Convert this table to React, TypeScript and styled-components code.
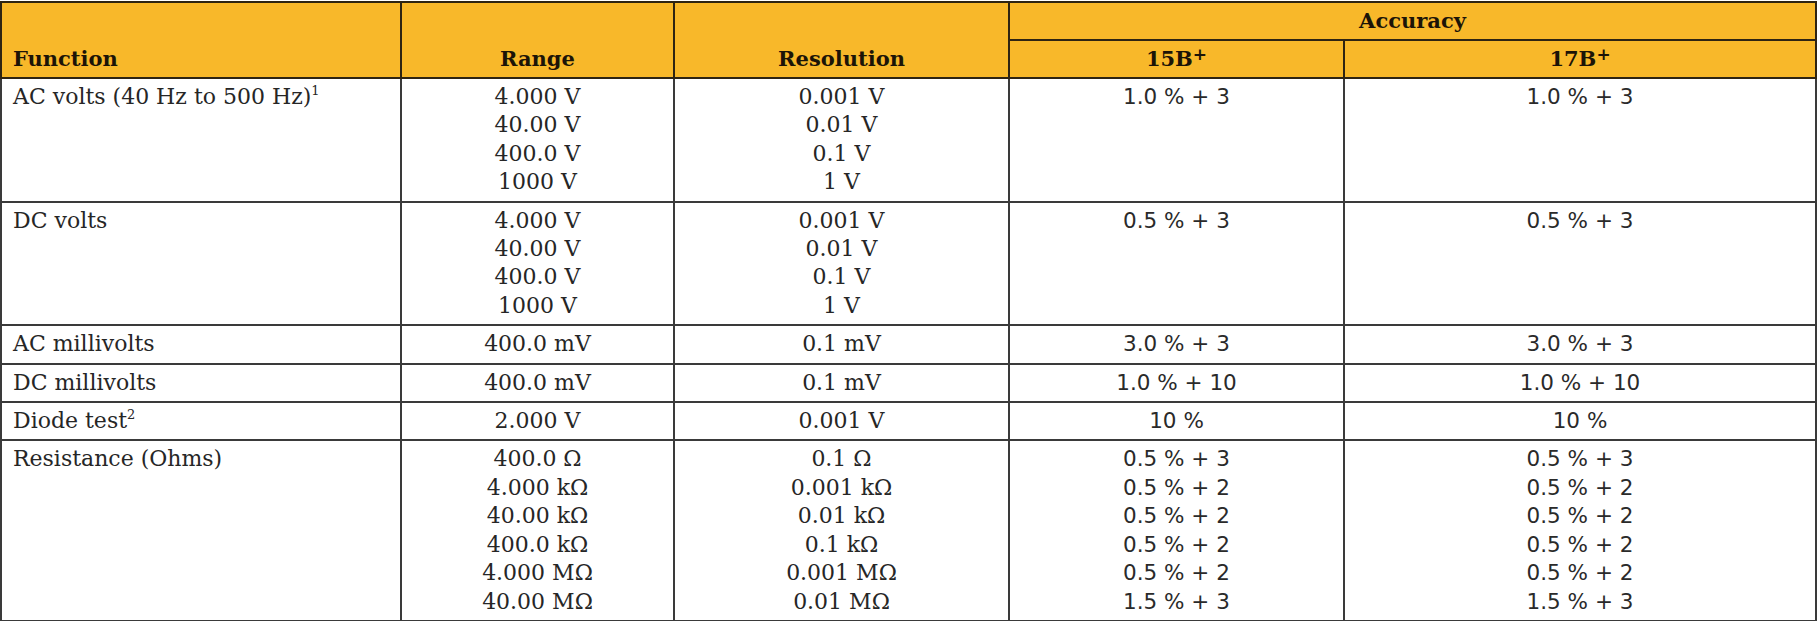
import React from 'react';
import styled, {createGlobalStyle} from 'styled-components';

const GlobalStyle = createGlobalStyle`
    html, body {
        margin: 0;
        padding: 0;
        background: #fff;
    }
`;

interface SpecRow {
    fn: string;
    note?: string;
    ranges: string[];
    resolutions: string[];
    acc15: string[];
    acc17: string[];
}

const rows: SpecRow[] = [
    {
        fn: 'AC volts (40 Hz to 500 Hz)',
        note: '1',
        ranges: ['4.000 V', '40.00 V', '400.0 V', '1000 V'],
        resolutions: ['0.001 V', '0.01 V', '0.1 V', '1 V'],
        acc15: ['1.0 % + 3'],
        acc17: ['1.0 % + 3'],
    },
    {
        fn: 'DC volts',
        ranges: ['4.000 V', '40.00 V', '400.0 V', '1000 V'],
        resolutions: ['0.001 V', '0.01 V', '0.1 V', '1 V'],
        acc15: ['0.5 % + 3'],
        acc17: ['0.5 % + 3'],
    },
    {
        fn: 'AC millivolts',
        ranges: ['400.0 mV'],
        resolutions: ['0.1 mV'],
        acc15: ['3.0 % + 3'],
        acc17: ['3.0 % + 3'],
    },
    {
        fn: 'DC millivolts',
        ranges: ['400.0 mV'],
        resolutions: ['0.1 mV'],
        acc15: ['1.0 % + 10'],
        acc17: ['1.0 % + 10'],
    },
    {
        fn: 'Diode test',
        note: '2',
        ranges: ['2.000 V'],
        resolutions: ['0.001 V'],
        acc15: ['10 %'],
        acc17: ['10 %'],
    },
    {
        fn: 'Resistance (Ohms)',
        ranges: ['400.0 Ω', '4.000 kΩ', '40.00 kΩ', '400.0 kΩ', '4.000 MΩ', '40.00 MΩ'],
        resolutions: ['0.1 Ω', '0.001 kΩ', '0.01 kΩ', '0.1 kΩ', '0.001 MΩ', '0.01 MΩ'],
        acc15: ['0.5 % + 3', '0.5 % + 2', '0.5 % + 2', '0.5 % + 2', '0.5 % + 2', '1.5 % + 3'],
        acc17: ['0.5 % + 3', '0.5 % + 2', '0.5 % + 2', '0.5 % + 2', '0.5 % + 2', '1.5 % + 3'],
    },
];

/* Spec table */
const Table = styled.table`
    width: 1815px;
    table-layout: fixed;
    border-collapse: collapse;
    border: 2px solid #333;
    margin-top: 1px;
`;

const HeadCell = styled.th<{ $align?: 'left' | 'center'; $valign?: 'bottom' | 'middle' }>`
    background: #f8b82a;
    color: #1c1407;
    font-family: "DejaVu Serif", serif;
    font-weight: 700;
    font-size: 21px;
    line-height: 26px;
    text-align: ${({$align}) => $align || 'center'};
    vertical-align: ${({$valign}) => $valign || 'middle'};
    border: 2px solid #2e2412;
    padding: 5px 11px 5px 11px;
    height: 25px;
`;

const Plus = styled.sup`
    font-size: 17px;
    line-height: 0;
    vertical-align: 6px;
`;

const Cell = styled.td<{ $align?: 'left' | 'center' }>`
    border: 2px solid #3a3a3a;
    vertical-align: top;
    text-align: ${({$align}) => $align || 'center'};
    padding: 4px 11px 4px 11px;
    color: #262626;
    font-family: "DejaVu Serif", serif;
    font-size: 22px;
    line-height: 28.4px;
`;

/* Accuracy values use a plain sans face */
const AccCell = styled(Cell)`
    font-family: "DejaVu Sans", sans-serif;
    font-size: 21.5px;
    color: #2a2a2a;
`;

const Line = styled.div`
    white-space: nowrap;
`;

const Note = styled.sup`
    font-size: 13px;
    line-height: 0;
    vertical-align: 9px;
`;

const Lines: React.FC<{ items: string[] }> = ({items}) => (
    <>
        {items.map((t, i) => (
            <Line key={i}>{t}</Line>
        ))}
    </>
);

const App: React.FC = () => {
    return (
        <>
            <GlobalStyle/>
            <Table>
                <colgroup>
                    <col style={{width: 400}}/>
                    <col style={{width: 273}}/>
                    <col style={{width: 335}}/>
                    <col style={{width: 335}}/>
                    <col style={{width: 472}}/>
                </colgroup>
                <thead>
                <tr>
                    <HeadCell rowSpan={2} $align="left" $valign="bottom">Function</HeadCell>
                    <HeadCell rowSpan={2} $valign="bottom">Range</HeadCell>
                    <HeadCell rowSpan={2} $valign="bottom">Resolution</HeadCell>
                    <HeadCell colSpan={2}>Accuracy</HeadCell>
                </tr>
                <tr>
                    <HeadCell>15B<Plus>+</Plus></HeadCell>
                    <HeadCell>17B<Plus>+</Plus></HeadCell>
                </tr>
                </thead>
                <tbody>
                {rows.map((r) => (
                    <tr key={r.fn}>
                        <Cell $align="left">
                            {r.fn}
                            {r.note && <Note>{r.note}</Note>}
                        </Cell>
                        <Cell><Lines items={r.ranges}/></Cell>
                        <Cell><Lines items={r.resolutions}/></Cell>
                        <AccCell><Lines items={r.acc15}/></AccCell>
                        <AccCell><Lines items={r.acc17}/></AccCell>
                    </tr>
                ))}
                </tbody>
            </Table>
        </>
    );
};

export default App;
